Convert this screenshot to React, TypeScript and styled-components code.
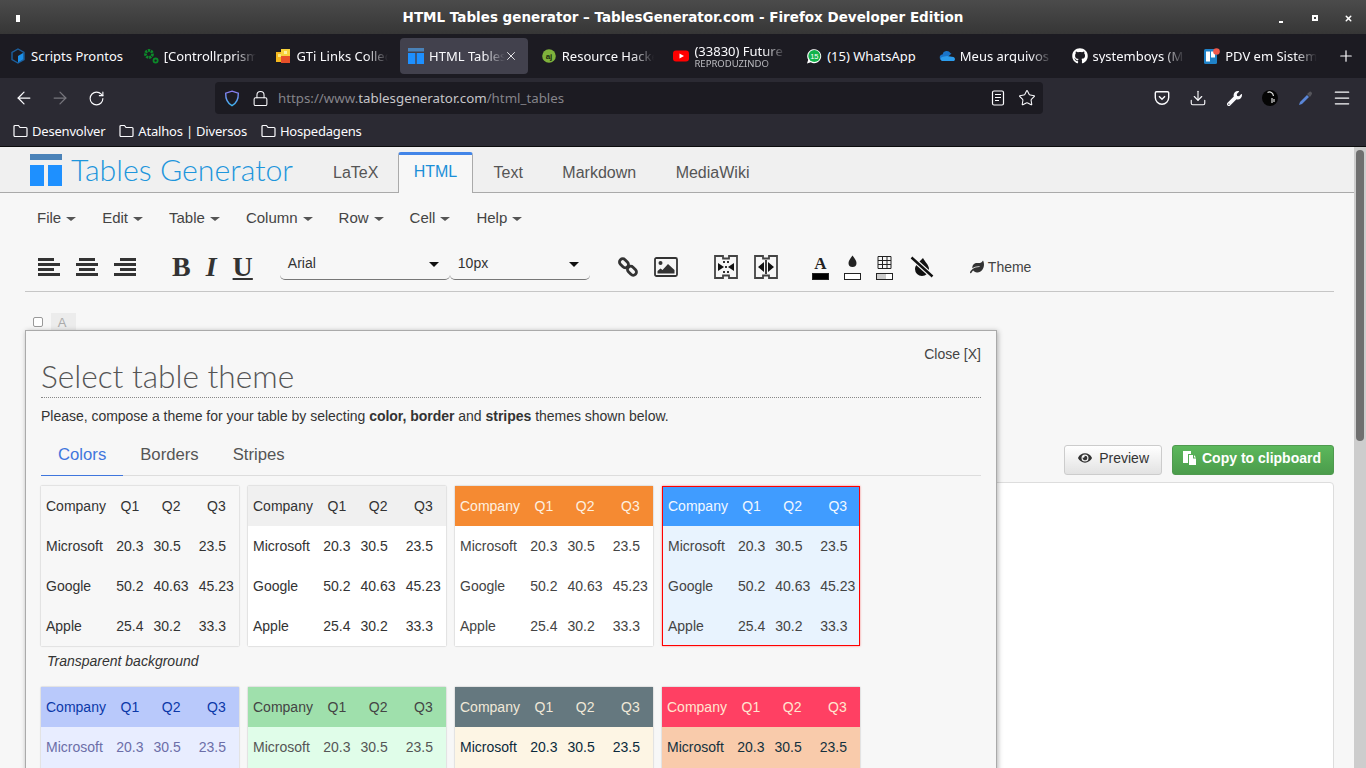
import React from "react"
import styled, { createGlobalStyle } from "styled-components"
import {
  ArrowLeft,
  ArrowRight,
  Download,
  Lock,
  Menu,
  Plus,
  RotateCw,
  Star,
  X,
} from "lucide-react"
import { FaEye, FaGithub, FaLeaf, FaWrench } from "react-icons/fa"

const GlobalStyle = createGlobalStyle`
  html, body { margin: 0; padding: 0; height: 768px; overflow: hidden; background: #f7f7f7; }
  * { box-sizing: border-box; }
`

const Screen = styled.div`
  width: 1366px;
  height: 768px;
  display: flex;
  flex-direction: column;
  overflow: hidden;
  font-family: "Liberation Sans", Arial, sans-serif;
`

/* window + browser chrome */
const TitleBar = styled.div`
  height: 34px;
  flex: none;
  position: relative;
  display: flex;
  align-items: center;
  justify-content: center;
  background: linear-gradient(#4b4b4b, #363636);
  color: #fff;
  font: bold 13.5px "DejaVu Sans", sans-serif;
`
const WinMark = styled.span`
  position: absolute;
  left: 16px;
  top: 15px;
  width: 4px;
  height: 7px;
  background: #fff;
`
const WinMin = styled.span`
  position: absolute;
  left: 1279px;
  top: 21px;
  width: 4px;
  height: 2px;
  background: #fff;
`
const WinMax = styled.span`
  position: absolute;
  left: 1312px;
  top: 15px;
  width: 6px;
  height: 6px;
  border: 2px solid #fff;
`
const WinClose = styled(X)`
  position: absolute;
  left: 1344px;
  top: 14px;
`
const TabStrip = styled.div`
  height: 44px;
  flex: none;
  display: flex;
  align-items: center;
  padding-left: 2px;
  background: #1c1b22;
`
const BrowserTab = styled.div<{ $active?: boolean }>`
  width: ${p => (p.$active ? 128 : 132.7)}px;
  margin-right: ${p => (p.$active ? 4.7 : 0)}px;
  height: 36px;
  flex: none;
  display: flex;
  align-items: center;
  gap: 5px;
  padding-left: 8px;
  position: relative;
  border-radius: 4px;
  color: #fbfbfe;
  font: 13px "Noto Sans", sans-serif;
  background: ${p => (p.$active ? "#42414d" : "transparent")};
`
const TabLabel = styled.div<{ $active?: boolean; $fade?: boolean }>`
  width: ${p => (p.$active ? 76 : 92)}px;
  white-space: nowrap;
  overflow: hidden;
  line-height: 14px;
  ${p =>
    p.$fade &&
    `
    -webkit-mask-image: linear-gradient(to right, #000 calc(100% - 22px), transparent);
    mask-image: linear-gradient(to right, #000 calc(100% - 22px), transparent);
  `}
`
const TabSub = styled.div`
  font-size: 9.5px;
  line-height: 11px;
  color: #bdbdc2;
`
const TabClose = styled(X)`
  position: absolute;
  right: 10px;
  top: 11px;
`
const NewTab = styled(Plus)`
  margin-left: 8px;
`
const NavBar = styled.div`
  height: 40px;
  flex: none;
  display: flex;
  align-items: center;
  padding-left: 6px;
  background: #2b2a33;
`
const NavButton = styled.div<{ $dim?: boolean }>`
  width: 36px;
  height: 32px;
  flex: none;
  display: flex;
  align-items: center;
  justify-content: center;
  color: ${p => (p.$dim ? "#77767d" : "#fbfbfe")};
`
const UrlBar = styled.div`
  width: 828px;
  height: 32px;
  margin-left: 101px;
  margin-right: 101px;
  flex: none;
  display: flex;
  align-items: center;
  padding: 0 7px 0 9px;
  border-radius: 4px;
  background: #1c1b22;
  color: #fbfbfe;
`
const UrlText = styled.div`
  flex: 1;
  margin-left: 9px;
  font: 13.3px "Noto Sans", sans-serif;
  color: #85848a;
  b {
    font-weight: 400;
    color: #c6c6c9;
  }
`
const UrlIcons = styled.div`
  display: flex;
  align-items: center;
  gap: 13px;
`
const LockIcon = styled(Lock)`
  margin-left: 12px;
`
const Bookmarks = styled.div`
  height: 29px;
  flex: none;
  display: flex;
  align-items: center;
  gap: 14px;
  padding: 0 0 3px 13px;
  background: #2b2a33;
  border-bottom: 1px solid #0c0c0d;
  color: #fbfbfe;
  font: 13px "Noto Sans", sans-serif;
  letter-spacing: -0.2px;
`
const Bookmark = styled.div`
  display: flex;
  align-items: center;
  gap: 4px;
`

/* page */
const Viewport = styled.div`
  flex: 1;
  min-height: 0;
  display: flex;
`
const Page = styled.div`
  flex: 1;
  position: relative;
  overflow: hidden;
  background: #f7f7f7;
  color: #444;
`
const ScrollTrack = styled.div`
  width: 12px;
  flex: none;
  padding: 3px 2px 0;
  background: #cdcdcd;
`
const ScrollThumb = styled.div`
  height: 291px;
  border-radius: 4px;
  background: #6f6f6f;
`
const SiteHeader = styled.div`
  height: 46px;
  display: flex;
  align-items: flex-end;
  padding-left: 30px;
  background: #f0f0f0;
  border-bottom: 1px solid #aaa;
`
const LogoMark = styled.svg`
  align-self: flex-start;
  margin-top: 7px;
  flex: none;
`
const LogoText = styled.div`
  align-self: flex-start;
  width: 242.3px;
  margin-left: 9px;
  margin-top: 1px;
  font: 300 30.3px/42px Lato, sans-serif;
  color: #1e96dc;
  white-space: nowrap;
`
const SiteTab = styled.div<{ $active?: boolean }>`
  height: ${p => (p.$active ? 41 : 36)}px;
  padding: 0 ${p => (p.$active ? 14.5 : 19.75)}px;
  margin-right: ${p => (p.$active ? 1 : 0)}px;
  margin-bottom: -1px;
  font-size: 16px;
  line-height: ${p => (p.$active ? 34 : 32)}px;
  color: ${p => (p.$active ? "#1b8fd8" : "#555")};
  background: ${p => (p.$active ? "#f7f7f7" : "transparent")};
  border: ${p => (p.$active ? "1px solid #aaa" : "0")};
  border-top: ${p => (p.$active ? "3px solid #4285e8" : "0")};
  border-bottom: 0;
  border-radius: 3px 3px 0 0;
`
const MenuBar = styled.div`
  height: 52px;
  display: flex;
  align-items: center;
  gap: 26px;
  padding: 0 0 4px 37px;
  font-size: 15px;
  color: #444;
`
const MenuItem = styled.div`
  display: flex;
  align-items: center;
  gap: 5px;
`
const Caret = styled.span<{ $dark?: boolean }>`
  width: 0;
  height: 0;
  margin-top: 3px;
  border-top: ${p => (p.$dark ? "5px solid #111" : "4px solid #555")};
  border-left: 5px solid transparent;
  border-right: 5px solid transparent;
`
const Toolbar = styled.div`
  height: 47px;
  margin: 0 20px 0 25px;
  padding: 0 0 3px 13px;
  display: flex;
  align-items: center;
  border-bottom: 1px solid #c6c6c6;
`
const ToolIcon = styled.svg<{ $ml: number }>`
  flex: none;
  margin-left: ${p => p.$ml}px;
  color: #333;
`
const FormatGlyph = styled.span<{ $ml: number; $italic?: boolean; $under?: boolean }>`
  margin-left: ${p => p.$ml}px;
  font: ${p => (p.$italic ? "italic" : "")} bold 28px/30px "Liberation Serif", serif;
  color: #333;
  text-decoration: ${p => (p.$under ? "underline" : "none")};
  text-decoration-thickness: 2px;
  text-underline-offset: 2px;
`
const SelectBox = styled.div<{ $w: number; $ml?: number }>`
  width: ${p => p.$w}px;
  height: 32px;
  margin-left: ${p => p.$ml ?? 0}px;
  margin-bottom: 6px;
  padding: 0 11px 0 8px;
  display: flex;
  align-items: center;
  justify-content: space-between;
  font-size: 14px;
  color: #333;
  border-bottom: 1px solid #777;
  border-radius: 0 0 5px 5px;
`
const ThemeButton = styled.div`
  margin-left: 36px;
  display: flex;
  align-items: center;
  gap: 4px;
  font-size: 14px;
  color: #444;
`
const OptionRow = styled.div`
  height: 38px;
  display: flex;
  align-items: flex-start;
  padding: 21px 0 0 33px;
`
const CheckBox = styled.span`
  width: 10px;
  height: 10px;
  margin-top: 4px;
  border: 1px solid #999;
  border-radius: 2px;
  background: #fff;
`
const ColumnLetter = styled.span`
  width: 25px;
  height: 17px;
  margin-left: 8px;
  padding-right: 3px;
  text-align: center;
  font-size: 13px;
  line-height: 20px;
  color: #aaa;
  background: #ececec;
`
const ActionRow = styled.div`
  margin-top: 115px;
  padding-right: 20px;
  display: flex;
  justify-content: flex-end;
  gap: 10px;
`
const ActionButton = styled.div<{ $green?: boolean }>`
  height: 30px;
  padding: 0 12px 5px ${p => (p.$green ? 9 : 13)}px;
  display: flex;
  align-items: center;
  gap: ${p => (p.$green ? 5 : 7)}px;
  border-radius: 3px;
  font-size: 14px;
  font-weight: ${p => (p.$green ? 700 : 400)};
  color: ${p => (p.$green ? "#fff" : "#333")};
  border: 1px solid ${p => (p.$green ? "#4f9a4f" : "#ccc")};
  background: ${p =>
    p.$green
      ? "linear-gradient(#5cb85c, #4b9c4b)"
      : "linear-gradient(#fff, #e2e2e2)"};
`
const ResultPanel = styled.div`
  height: 300px;
  margin: 7px 20px 0 25px;
  background: #fff;
  border: 1px solid #ddd;
  border-radius: 4px;
`

/* theme dialog */
const Dialog = styled.div`
  position: absolute;
  left: 25px;
  top: 183px;
  width: 972px;
  height: 480px;
  padding: 0 15px;
  overflow: hidden;
  background: #f7f7f7;
  border: 1px solid #aaa;
  box-shadow: 1px 1px 5px rgba(0, 0, 0, 0.3);
`
const CloseLink = styled.div`
  padding-top: 15px;
  text-align: right;
  font-size: 14px;
  line-height: 16px;
  color: #444;
`
const DialogTitle = styled.h2`
  margin: 0;
  height: 36px;
  font: 300 31.6px/28px Lato, sans-serif;
  color: #555;
  border-bottom: 1px dotted #888;
`
const DialogIntro = styled.p`
  margin: 10px 0 0;
  font-size: 14px;
  line-height: 16px;
  letter-spacing: -0.02px;
  color: #333;
`
const DialogTabs = styled.div`
  margin-top: 13px;
  height: 39px;
  display: flex;
  border-bottom: 1px solid #ddd;
`
const DialogTab = styled.div<{ $active?: boolean }>`
  height: 39px;
  padding: 0 17px;
  font-size: 16.7px;
  line-height: 36px;
  color: ${p => (p.$active ? "#3f76dd" : "#555")};
  border-bottom: 1px solid ${p => (p.$active ? "#3f76dd" : "transparent")};
`
const ThemeGrid = styled.div`
  margin-top: 10px;
  display: grid;
  grid-template-columns: repeat(4, 198px);
  column-gap: 9px;
`
const ThemeCaption = styled.div`
  grid-column: 1 / -1;
  height: 41px;
  padding: 7px 0 0 6px;
  font-size: 14px;
  line-height: 16px;
  font-style: italic;
  color: #333;
`
const ThemeCard = styled.div<{ $selected?: boolean }>`
  position: relative;
  height: 160px;
  box-shadow: ${p => (p.$selected ? "0 0 2px rgba(255, 0, 0, 0.5)" : "0 0 1.5px rgba(0, 0, 0, 0.3)")};
  th:first-child,
  td:first-child {
    padding-left: ${p => (p.$selected ? 6 : 5)}px;
  }
  ${p =>
    p.$selected &&
    `
    &::after {
      content: "";
      position: absolute;
      inset: 0;
      border: 1px solid #f00;
    }
  `}
`
const ThemeTable = styled.table<{ $body: string; $text: string }>`
  width: 100%;
  border-collapse: collapse;
  font-size: 14px;
  color: ${p => p.$text};
  background: ${p => p.$body};
  td,
  th {
    height: 40px;
    padding: 0 5px;
    font-weight: 400;
    text-align: left;
    white-space: nowrap;
  }
  th + th {
    text-align: center;
  }
`
const HeadRow = styled.tr<{ $bg: string; $text: string }>`
  background: ${p => p.$bg};
  color: ${p => p.$text};
`

const themes = [
  { head: "transparent", headText: "#333", body: "transparent", text: "#333" },
  { head: "#f0f0f0", headText: "#333", body: "#fff", text: "#333" },
  { head: "#f58a32", headText: "#fdf0e0", body: "#fff", text: "#444" },
  { head: "#409cff", headText: "#f2f8ff", body: "#e8f3fe", text: "#444", selected: true },
  { head: "#b9c9fb", headText: "#0b38a8", body: "#e8edff", text: "#6c6ea8" },
  { head: "#9fe0ac", headText: "#444", body: "#e0fde9", text: "#555" },
  { head: "#65787f", headText: "#f0e8d8", body: "#fdf5e4", text: "#0b2a3c" },
  { head: "#ff4063", headText: "#ffe6d0", body: "#f9cbab", text: "#14313e" },
]

const rows = [
  ["Microsoft", "20.3", "30.5", "23.5"],
  ["Google", "50.2", "40.63", "45.23"],
  ["Apple", "25.4", "30.2", "33.3"],
]

const browserTabs = [
  { icon: "cube", label: "Scripts Prontos" },
  { icon: "gears", label: "[Controllr.prism", fade: true },
  { icon: "gti", label: "GTi Links Collec", fade: true },
  { icon: "tables", label: "HTML Tables generator", active: true, fade: true },
  { icon: "aj", label: "Resource Hacker", fade: true },
  { icon: "youtube", label: "(33830) Future", sub: "REPRODUZINDO", fade: true },
  { icon: "whatsapp", label: "(15) WhatsApp" },
  { icon: "cloud", label: "Meus arquivos", fade: true },
  { icon: "github", label: "systemboys (M", fade: true },
  { icon: "pdv", label: "PDV em Sistema", fade: true },
]

function Favicon({ kind }: { kind: string }) {
  if (kind === "github") return <FaGithub size={16} color="#fff" style={{ flex: "none" }} />
  const art: Record<string, React.ReactNode> = {
    cube: (
      <>
        <path d="M8 1 14 4.500v7L8 15 2 11.500v-7z" fill="none" stroke="#1c5f9e" strokeWidth="1.400" />
        <path d="M8 8 13.400 4.800v6.400L8 14.400z" fill="#1b8fe8" />
      </>
    ),
    gears: (
      <>
        <circle cx="6" cy="6" r="3.500" fill="none" stroke="#0c8a2a" strokeWidth="2.800" strokeDasharray="2.200 .8" />
        <circle cx="12.600" cy="12.600" r="2.100" fill="none" stroke="#0c8a2a" strokeWidth="1.800" />
      </>
    ),
    gti: (
      <>
        <rect x="1" y="4" width="8" height="10" fill="#f4b71e" />
        <rect x="6" y="1" width="9" height="9" fill="#f7d23c" />
        <rect x="6" y="8" width="9" height="7" fill="#e8502a" />
        <rect x="3" y="6" width="3" height="3" fill="#fbe57a" />
        <rect x="9" y="3" width="3" height="3" fill="#fdf0a0" />
      </>
    ),
    tables: (
      <>
        <rect x="0" y="0" width="16" height="3.500" fill="#4a82b8" />
        <rect x="0" y="5" width="7.300" height="11" fill="#1e90ff" />
        <rect x="8.700" y="5" width="7.300" height="11" fill="#1e90ff" />
      </>
    ),
    aj: (
      <>
        <circle cx="8" cy="8" r="6.800" fill="#7fb23c" />
        <text x="8" y="11" fontSize="8" fontWeight="700" textAnchor="middle" fill="#1b2b10" fontFamily="Liberation Sans">
          aj
        </text>
      </>
    ),
    youtube: (
      <>
        <rect x="0" y="2.500" width="16" height="11" rx="3" fill="#f00" />
        <path d="M6.500 5.500 11 8l-4.500 2.500z" fill="#fff" />
      </>
    ),
    whatsapp: (
      <>
        <path d="M1 15.500 2.200 11.800A7 7 0 1 1 4.800 14.300z" fill="#fff" />
        <circle cx="8.300" cy="8" r="6" fill="#12b24a" />
        <text x="8.300" y="10.600" fontSize="7.500" textAnchor="middle" fill="#fff" fontFamily="Liberation Sans">
          15
        </text>
      </>
    ),
    cloud: (
      <>
        <path d="M4 12.500a3 3 0 0 1-.5-6 4.300 4.300 0 0 1 8-1.300 3.200 3.200 0 0 1 1 .3L5 12.500z" fill="#1a74c9" />
        <path d="M3 13a2.200 2.200 0 0 1 1-4.200l4-.8 6.500 1a2.300 2.300 0 0 1 .5 4z" fill="#2c9cec" />
      </>
    ),
    pdv: (
      <>
        <rect x="0" y="1" width="13" height="15" rx="1.500" fill="#1f82c8" />
        <rect x="2" y="3.500" width="4" height="10" fill="#fff" />
        <rect x="7" y="3.500" width="4" height="6" fill="#fff" />
        <circle cx="12.500" cy="3.500" r="3.300" fill="#f0594c" />
      </>
    ),
  }
  return (
    <svg width="16" height="16" viewBox="0 0 16 16" style={{ flex: "none" }}>
      {art[kind]}
    </svg>
  )
}

const FolderIcon = () => (
  <svg width="15" height="14" viewBox="0 0 15 14" fill="none" stroke="#fbfbfe" strokeWidth="1.200">
    <path d="M1 11.500v-9a1 1 0 0 1 1-1h3.500l1.500 2h6a1 1 0 0 1 1 1v7a1 1 0 0 1-1 1H2a1 1 0 0 1-1-1z" />
  </svg>
)

const ShieldIcon = () => (
  <svg width="16" height="17" viewBox="0 0 16 17" fill="none" strokeWidth="1.400">
    <defs>
      <linearGradient id="shield" x1="0" y1="0" x2="0" y2="1">
        <stop offset="0" stopColor="#8a7bf0" />
        <stop offset="1" stopColor="#3fb4f0" />
      </linearGradient>
    </defs>
    <path d="M8 1.200 14.300 3.200c.2 5.500-1.500 9.800-6.300 12.400C3.200 13 1.500 8.700 1.700 3.200z" stroke="url(#shield)" />
  </svg>
)

const ReaderIcon = () => (
  <svg width="14" height="16" viewBox="0 0 14 16" fill="none" stroke="#fbfbfe" strokeWidth="1.200">
    <rect x="1.500" y="1" width="11" height="14" rx="1.500" />
    <path d="M4 4.500h6M4 7.500h6M4 10.500h4" />
  </svg>
)

const PocketIcon = () => (
  <svg width="16" height="16" viewBox="0 0 16 16" fill="none" stroke="#fbfbfe" strokeWidth="1.400">
    <path d="M2.500 1.700h11a1.200 1.200 0 0 1 1.200 1.200v4.600a6.700 6.700 0 0 1-13.400 0V2.900a1.200 1.200 0 0 1 1.200-1.200z" />
    <path d="M5 6.300 8 9.200l3-2.900" />
  </svg>
)

const AvatarIcon = () => (
  <svg width="16" height="16" viewBox="0 0 16 16">
    <circle cx="8" cy="8" r="8" fill="#050505" />
    <path d="M5.500 2.500c3-1.500 5.500.5 6 3.500M10 8v5M12 9v3" stroke="#ddd" strokeWidth="1.200" fill="none" />
  </svg>
)

const DropperIcon = () => (
  <svg width="16" height="16" viewBox="0 0 16 16">
    <path d="M1 15 2 12l7-7 2 2-7 7z" fill="#5a86d8" />
    <path d="M9 4 11 2.200a1.500 1.500 0 0 1 2.500 2.500L12 7z" fill="#55555c" />
  </svg>
)

const AlignIcon = ({ ml, variant }: { ml: number; variant: "left" | "center" | "right" }) => {
  const shortX = variant === "left" ? 0 : variant === "center" ? 3 : 6
  return (
    <ToolIcon $ml={ml} width="22" height="18" viewBox="0 0 22 18" fill="currentColor">
      <rect x={shortX} y="0" width="16" height="3" />
      <rect x="0" y="5" width="22" height="3" />
      <rect x={shortX} y="10" width="16" height="3" />
      <rect x="0" y="15" width="22" height="3" />
    </ToolIcon>
  )
}

const ticketFrame = "M1 1h8v2.500h6V1h8v22h-8v-2.500H9V23H1z"

const swatch = (fill: string, content?: React.ReactNode) => (
  <>
    <rect x="0.500" y="19.500" width="16" height="6" fill={fill} stroke="#222" />
    {content}
  </>
)

export default function App() {
  return (
    <Screen>
      <GlobalStyle />
      <TitleBar>
        <WinMark />
        HTML Tables generator – TablesGenerator.com - Firefox Developer Edition
        <WinMin />
        <WinMax />
        <WinClose size={9} color="#fff" strokeWidth={4} />
      </TitleBar>
      <TabStrip>
        {browserTabs.map(tab => (
          <BrowserTab key={tab.label} $active={tab.active}>
            <Favicon kind={tab.icon} />
            <TabLabel $active={tab.active} $fade={tab.fade}>
              {tab.label}
              {tab.sub && <TabSub>{tab.sub}</TabSub>}
            </TabLabel>
            {tab.active && <TabClose size={14} color="#fbfbfe" strokeWidth={1.5} />}
          </BrowserTab>
        ))}
        <NewTab size={18} color="#fbfbfe" strokeWidth={1.6} />
      </TabStrip>
      <NavBar>
        <NavButton>
          <ArrowLeft size={20} strokeWidth={1.5} />
        </NavButton>
        <NavButton $dim>
          <ArrowRight size={20} strokeWidth={1.5} />
        </NavButton>
        <NavButton>
          <RotateCw size={17} strokeWidth={1.6} />
        </NavButton>
        <UrlBar>
          <ShieldIcon />
          <LockIcon size={17} strokeWidth={1.5} />
          <UrlText>
            https://www.<b>tablesgenerator.com</b>/html_tables
          </UrlText>
          <UrlIcons>
            <ReaderIcon />
            <Star size={18} strokeWidth={1.4} />
          </UrlIcons>
        </UrlBar>
        <NavButton>
          <PocketIcon />
        </NavButton>
        <NavButton>
          <Download size={18} strokeWidth={1.5} />
        </NavButton>
        <NavButton>
          <FaWrench size={15} />
        </NavButton>
        <NavButton>
          <AvatarIcon />
        </NavButton>
        <NavButton>
          <DropperIcon />
        </NavButton>
        <NavButton>
          <Menu size={20} strokeWidth={1.5} />
        </NavButton>
      </NavBar>
      <Bookmarks>
        {["Desenvolver", "Atalhos | Diversos", "Hospedagens"].map(name => (
          <Bookmark key={name}>
            <FolderIcon />
            {name}
          </Bookmark>
        ))}
      </Bookmarks>
      <Viewport>
        <Page>
          <SiteHeader>
            <LogoMark width="32" height="32" viewBox="0 0 32 32">
              <rect width="32" height="6" fill="#4a82b8" />
              <rect y="11" width="14" height="21" fill="#1e90ff" />
              <rect x="18" y="11" width="14" height="21" fill="#1e90ff" />
            </LogoMark>
            <LogoText>Tables Generator</LogoText>
            <SiteTab>LaTeX</SiteTab>
            <SiteTab $active>HTML</SiteTab>
            <SiteTab>Text</SiteTab>
            <SiteTab>Markdown</SiteTab>
            <SiteTab>MediaWiki</SiteTab>
          </SiteHeader>
          <MenuBar>
            {["File", "Edit", "Table", "Column", "Row", "Cell", "Help"].map(item => (
              <MenuItem key={item}>
                {item}
                <Caret />
              </MenuItem>
            ))}
          </MenuBar>
          <Toolbar>
            <AlignIcon ml={0} variant="left" />
            <AlignIcon ml={16} variant="center" />
            <AlignIcon ml={16} variant="right" />
            <FormatGlyph $ml={36}>B</FormatGlyph>
            <FormatGlyph $ml={15} $italic>
              I
            </FormatGlyph>
            <FormatGlyph $ml={16} $under>
              U
            </FormatGlyph>
            <SelectBox $w={170} $ml={27}>
              Arial
              <Caret $dark />
            </SelectBox>
            <SelectBox $w={140}>
              10px
              <Caret $dark />
            </SelectBox>
            <ToolIcon $ml={28} width="20" height="20" viewBox="0 0 20 20" fill="none" stroke="currentColor" strokeWidth="2.800">
              <rect x="1" y="3" width="10" height="6.500" rx="3.200" transform="rotate(45 6 6.200)" />
              <rect x="9" y="10.500" width="10" height="6.500" rx="3.200" transform="rotate(45 14 13.700)" />
            </ToolIcon>
            <ToolIcon $ml={16} width="24" height="20" viewBox="0 0 24 20">
              <rect x="1" y="1" width="22" height="18" rx="1.500" fill="none" stroke="currentColor" strokeWidth="1.800" />
              <circle cx="6.500" cy="6" r="2" fill="currentColor" />
              <path d="M3.500 16.500v-2.500l3-2.500 2 1.500 5.500-6 6.500 6v3.500z" fill="currentColor" />
            </ToolIcon>
            <ToolIcon $ml={36} width="24" height="24" viewBox="0 0 24 24">
              <path d={ticketFrame} fill="none" stroke="#444" strokeWidth="1.800" />
              <path d="M4 8l6 4-6 4zM20 8l-6 4 6 4z" fill="#111" />
              <path d="M9 6h2v2H9zM13 6h2v2h-2zM9 16h2v2H9zM13 16h2v2h-2zM11 11h2v2h-2z" fill="#333" />
            </ToolIcon>
            <ToolIcon $ml={16} width="24" height="24" viewBox="0 0 24 24">
              <path d={ticketFrame} fill="none" stroke="#444" strokeWidth="1.800" />
              <path d="M10 7v10l-6-5zM14 7v10l6-5z" fill="#111" />
              <rect x="11.200" y="5" width="1.600" height="14" fill="#111" />
            </ToolIcon>
            <ToolIcon $ml={34} width="17" height="26" viewBox="0 0 17 26">
              {swatch(
                "#000",
                <text x="8.500" y="15" fontSize="17" fontWeight="700" textAnchor="middle" fontFamily="Liberation Serif" fill="#222">
                  A
                </text>
              )}
            </ToolIcon>
            <ToolIcon $ml={15} width="17" height="26" viewBox="0 0 17 26">
              {swatch("#fff", <path d="M8.500 1.500c2 3 4 5 4 7.500a4 4 0 0 1-8 0c0-2.500 2-4.500 4-7.500z" fill="#222" />)}
            </ToolIcon>
            <ToolIcon $ml={15} width="17" height="26" viewBox="0 0 17 26">
              {swatch(
                "#fff",
                <>
                  <rect x="1" y="20" width="9" height="5" fill="#ccc" />
                  <path d="M2 2.500h13v12H2zM2 6.500h13M2 10.500h13M6.500 2.500v12M11 2.500v12" fill="none" stroke="#222" />
                </>
              )}
            </ToolIcon>
            <ToolIcon $ml={17} width="24" height="24" viewBox="0 0 24 24">
              <path d="M13 3c2 4 6 7 6 11a7 7 0 0 1-14 0c0-2 1-3.500 2-5z" fill="#111" />
              <path d="M1.500 2.500 22.500 21.500" stroke="#f7f7f7" strokeWidth="5" />
              <path d="M1.500 2.500 22.500 21.500" stroke="#111" strokeWidth="2.400" />
            </ToolIcon>
            <ThemeButton>
              <FaLeaf size={14} color="#333" />
              Theme
            </ThemeButton>
          </Toolbar>
          <OptionRow>
            <CheckBox />
            <ColumnLetter>A</ColumnLetter>
          </OptionRow>
          <ActionRow>
            <ActionButton>
              <FaEye size={14} color="#333" />
              Preview
            </ActionButton>
            <ActionButton $green>
              <svg width="15" height="16" viewBox="0 0 15 16" fill="#fff">
                <path d="M1 1h8v3h-3v9H1z" />
                <path d="M7 5h4v3.500h3V15H7zM12 5l2 2.500h-2z" />
              </svg>
              Copy to clipboard
            </ActionButton>
          </ActionRow>
          <ResultPanel />
          <Dialog>
            <CloseLink>Close [X]</CloseLink>
            <DialogTitle>Select table theme</DialogTitle>
            <DialogIntro>
              Please, compose a theme for your table by selecting <b>color, border</b> and{" "}
              <b>stripes</b> themes shown below.
            </DialogIntro>
            <DialogTabs>
              <DialogTab $active>Colors</DialogTab>
              <DialogTab>Borders</DialogTab>
              <DialogTab>Stripes</DialogTab>
            </DialogTabs>
            <ThemeGrid>
              {themes.map((theme, i) => (
                <React.Fragment key={i}>
                  {i === 4 && <ThemeCaption>Transparent background</ThemeCaption>}
                  <ThemeCard $selected={theme.selected}>
                    <ThemeTable $body={theme.body} $text={theme.text}>
                      <thead>
                        <HeadRow $bg={theme.head} $text={theme.headText}>
                          <th>Company</th>
                          <th>Q1</th>
                          <th>Q2</th>
                          <th>Q3</th>
                        </HeadRow>
                      </thead>
                      <tbody>
                        {rows.map(row => (
                          <tr key={row[0]}>
                            {row.map(cell => (
                              <td key={cell}>{cell}</td>
                            ))}
                          </tr>
                        ))}
                      </tbody>
                    </ThemeTable>
                  </ThemeCard>
                </React.Fragment>
              ))}
            </ThemeGrid>
          </Dialog>
        </Page>
        <ScrollTrack>
          <ScrollThumb />
        </ScrollTrack>
      </Viewport>
    </Screen>
  )
}
